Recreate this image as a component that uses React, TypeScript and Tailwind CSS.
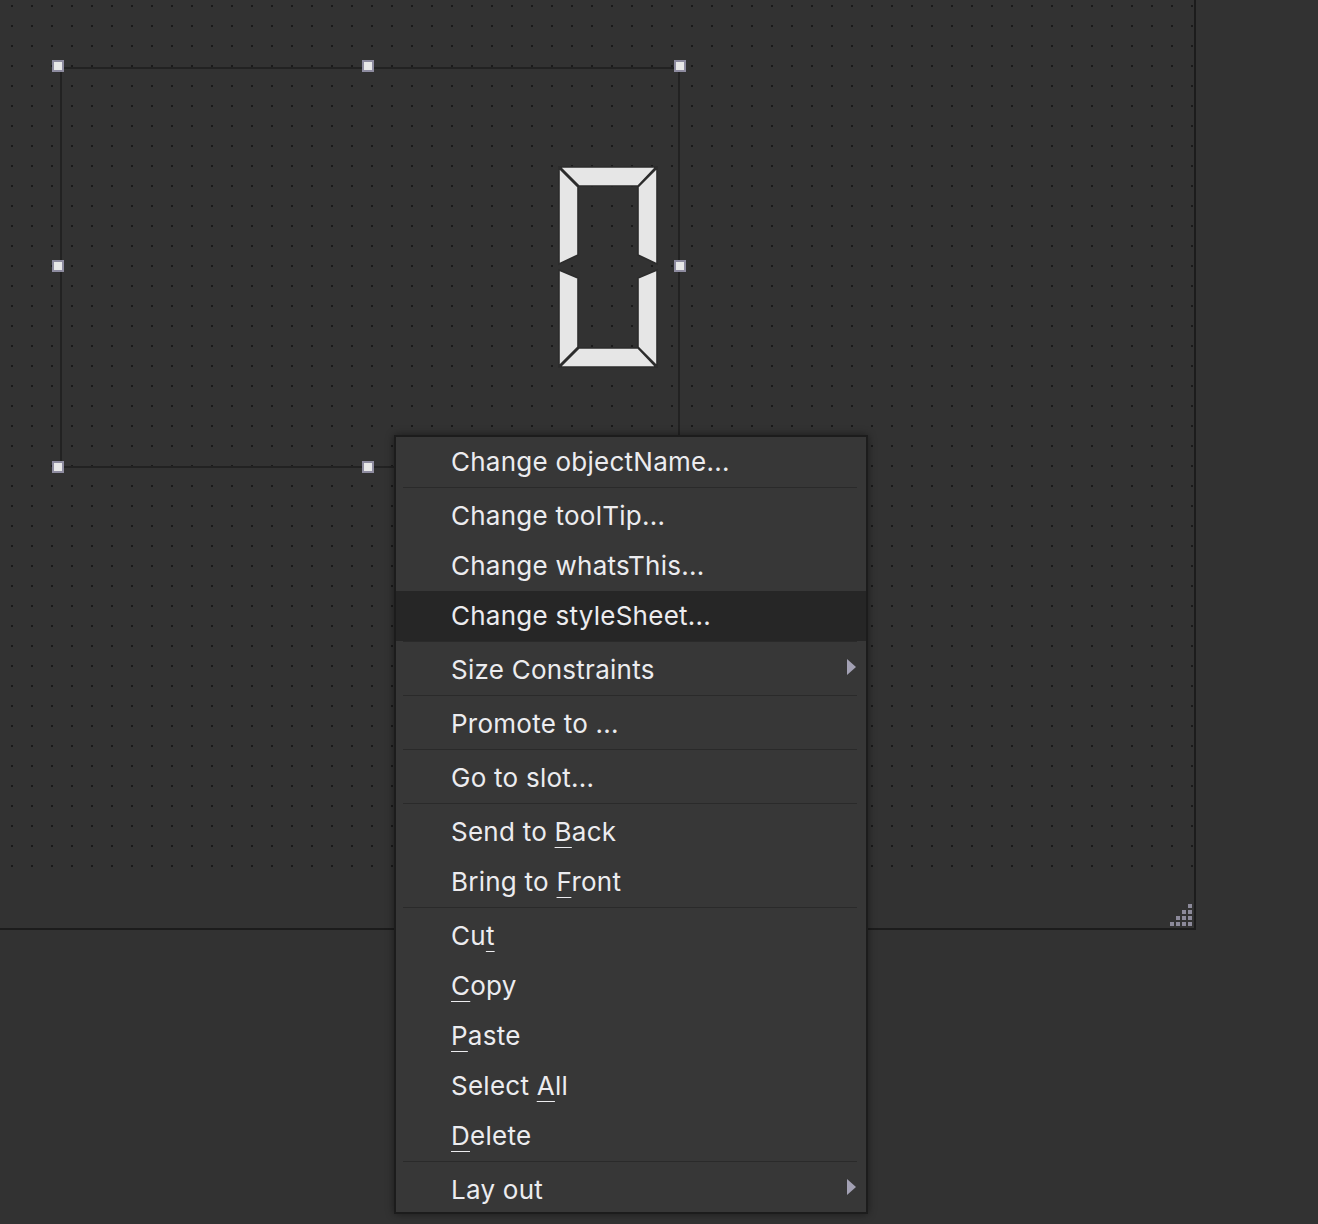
import React from "react";

// ── メニュー定義 ───────────────────────────────────────────
type Entry =
  | { kind: "item"; label: string; mnemonic?: number; submenu?: boolean; active?: boolean }
  | { kind: "sep" };

const MENU: Entry[] = [
  { kind: "item", label: "Change objectName..." },
  { kind: "sep" },
  { kind: "item", label: "Change toolTip..." },
  { kind: "item", label: "Change whatsThis..." },
  { kind: "item", label: "Change styleSheet...", active: true },
  { kind: "sep" },
  { kind: "item", label: "Size Constraints", submenu: true },
  { kind: "sep" },
  { kind: "item", label: "Promote to ..." },
  { kind: "sep" },
  { kind: "item", label: "Go to slot..." },
  { kind: "sep" },
  { kind: "item", label: "Send to Back", mnemonic: 8 },
  { kind: "item", label: "Bring to Front", mnemonic: 9 },
  { kind: "sep" },
  { kind: "item", label: "Cut", mnemonic: 2 },
  { kind: "item", label: "Copy", mnemonic: 0 },
  { kind: "item", label: "Paste", mnemonic: 0 },
  { kind: "item", label: "Select All", mnemonic: 7 },
  { kind: "item", label: "Delete", mnemonic: 0 },
  { kind: "sep" },
  { kind: "item", label: "Lay out", submenu: true },
];

// 選択ハンドルの位置（左上）— キャンバス上の座標そのもの
const HANDLES: [number, number][] = [
  [52, 60], [362, 60], [674, 60],
  [52, 260], [674, 260],
  [52, 461], [362, 461], [674, 461],
];

function Label({ text, mnemonic }: { text: string; mnemonic?: number }) {
  if (mnemonic === undefined) return <span>{text}</span>;
  return (
    <span>
      {text.slice(0, mnemonic)}
      <span className="underline decoration-1 underline-offset-[6px]">{text[mnemonic]}</span>
      {text.slice(mnemonic + 1)}
    </span>
  );
}

function SubArrow() {
  return (
    <svg width="9" height="16" viewBox="0 0 9 16" className="ml-auto mr-[10px] mb-[4px]">
      <polygon points="0,0 9,8 0,16" fill="#a3a1b4" />
    </svg>
  );
}

function LcdZero() {
  // 7セグ表示の「0」
  const fill = "#e6e6e6";
  const stroke = "#2c2c2c";
  return (
    <svg width="100" height="202" viewBox="-1 -1 100 202" className="absolute left-[558px] top-[166px]">
      <g fill={fill} stroke={stroke} strokeWidth="1.6" strokeLinejoin="miter">
        <polygon points="1,0 97,0 79,19 20,19" />
        <polygon points="0,1 19,20 19,88 0,97" />
        <polygon points="98,1 98,97 79,88 79,20" />
        <polygon points="0,103 19,111 19,180 0,199" />
        <polygon points="98,103 98,199 79,180 79,111" />
        <polygon points="1,200 20,181 79,181 97,200" />
      </g>
    </svg>
  );
}

function SizeGrip() {
  const dots: [number, number][] = [];
  for (let r = 0; r < 4; r++) {
    for (let c = 3 - r; c < 4; c++) dots.push([c * 6, r * 6]);
  }
  return (
    <svg width="22" height="22" viewBox="0 0 22 22">
      {dots.map(([x, y], i) => (
        <rect key={i} x={x} y={y} width="4" height="4" fill="#8c8a9a" />
      ))}
    </svg>
  );
}

export default function App() {
  return (
    <div
      className="relative w-[1318px] h-[1224px] overflow-hidden bg-[#323232]"
      style={{ fontFamily: "Inter, 'Noto Sans', 'Liberation Sans', sans-serif" }}
    >
      {/* ── フォーム ── */}
      <div className="flex flex-col w-[1196px] h-[930px] border-r-2 border-b-2 border-[#1c1c1c]">
        <div className="relative h-[884px] bg-[radial-gradient(circle,#1a1a1a_0.9px,transparent_1.3px)] bg-[length:20px_20px] bg-[position:2px_-4px]">
          {/* 選択中のウィジェット */}
          <div className="absolute left-[60px] top-[67px] w-[620px] h-[401px] border-2 border-[#222222]" />
          <LcdZero />
          {HANDLES.map(([x, y], i) => (
            <div
              key={i}
              className="absolute w-[12px] h-[12px] bg-[#e8e8e8] border-2 border-[#8e8ca0]"
              style={{ left: x, top: y }}
            />
          ))}
        </div>
        {/* ステータスバー */}
        <div className="flex flex-1 items-end justify-end pr-[2px] pb-[2px]">
          <SizeGrip />
        </div>
      </div>

      {/* ── コンテキストメニュー ── */}
      <div className="absolute left-[394px] top-[435px] w-[474px] h-[779px] overflow-hidden border-2 border-[#1c1c1c] bg-[#373737] shadow-[0_0_8px_rgba(0,0,0,0.45)]">
        {MENU.map((e, i) =>
          e.kind === "sep" ? (
            <div key={i} className="h-[4px] pl-[7px] pr-[9px]">
              <div className="h-px bg-[#2a2a2a]" />
            </div>
          ) : (
            <div
              key={i}
              className={`flex items-center h-[50px] pl-[55px] pb-[2px] text-[26px] text-[#ececef] tracking-[0.25px] ${
                e.active ? "bg-[#262626]" : ""
              }`}
            >
              <Label text={e.label} mnemonic={e.mnemonic} />
              {e.submenu && <SubArrow />}
            </div>
          )
        )}
      </div>
    </div>
  );
}
